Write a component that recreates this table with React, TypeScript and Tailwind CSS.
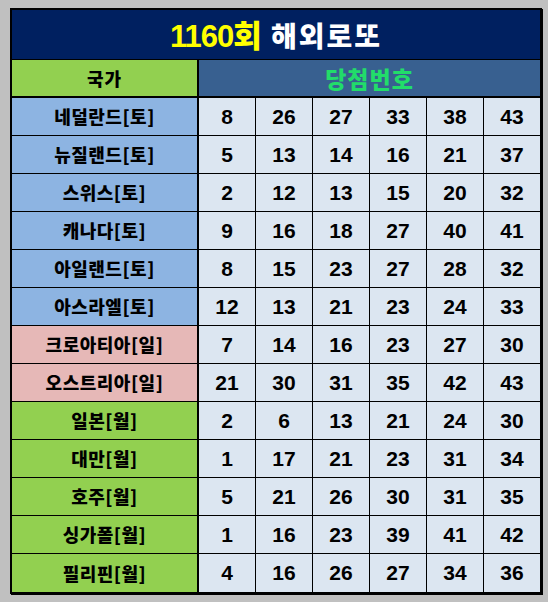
const rows: { name: string; tone: 'blue' | 'pink' | 'green'; nums: number[] }[] = [
  { name: '네덜란드[토]', tone: 'blue', nums: [8, 26, 27, 33, 38, 43] },
  { name: '뉴질랜드[토]', tone: 'blue', nums: [5, 13, 14, 16, 21, 37] },
  { name: '스위스[토]', tone: 'blue', nums: [2, 12, 13, 15, 20, 32] },
  { name: '캐나다[토]', tone: 'blue', nums: [9, 16, 18, 27, 40, 41] },
  { name: '아일랜드[토]', tone: 'blue', nums: [8, 15, 23, 27, 28, 32] },
  { name: '아스라엘[토]', tone: 'blue', nums: [12, 13, 21, 23, 24, 33] },
  { name: '크로아티아[일]', tone: 'pink', nums: [7, 14, 16, 23, 27, 30] },
  { name: '오스트리아[일]', tone: 'pink', nums: [21, 30, 31, 35, 42, 43] },
  { name: '일본[월]', tone: 'green', nums: [2, 6, 13, 21, 24, 30] },
  { name: '대만[월]', tone: 'green', nums: [1, 17, 21, 23, 31, 34] },
  { name: '호주[월]', tone: 'green', nums: [5, 21, 26, 30, 31, 35] },
  { name: '싱가폴[월]', tone: 'green', nums: [1, 16, 23, 39, 41, 42] },
  { name: '필리핀[월]', tone: 'green', nums: [4, 16, 26, 27, 34, 36] },
];

const toneClass = (tone: string) => {
  switch (tone) {
    case 'blue':
      return 'bg-[#8db4e2]';
    case 'pink':
      return 'bg-[#e6b8b7]';
    default:
      return 'bg-[#92d050]';
  }
};

const latin = "font-['Liberation_Sans','Noto_Sans_CJK_KR',sans-serif]";
const hangul = "font-['Noto_Sans_CJK_KR',sans-serif]";

export default function App() {
  return (
    <div className={`h-[602px] w-[548px] bg-[#c0c0c0] pt-[8px] pl-[10px] ${latin}`}>
      <div className="w-[532px] border-2 border-black shadow-[1px_1px_0_#000]">
        <div className="flex h-[50px] items-center justify-center gap-[10px] border-b border-black bg-[#002060]">
          <span className="text-[31px] font-bold leading-none tracking-[-1px] text-[#ffff00]">
            1160<span className={`${hangul} font-black`}>회</span>
          </span>
          <span className={`${hangul} text-[28px] font-black leading-none tracking-[2px] text-white`}>해외로또</span>
        </div>
        <div className={`grid h-[38px] grid-cols-[187px_1fr] border-b-2 border-black font-black ${hangul}`}>
          <div className="flex items-center justify-center border-r-2 border-black bg-[#92d050] text-[18px] tracking-[1px] text-black">
            국가
          </div>
          <div className="flex items-center justify-center bg-[#386090] text-[23px] tracking-[1px] text-[#22dc6a]">
            당첨번호
          </div>
        </div>
        {rows.map((row, idx) => (
          <div
            key={row.name}
            className={`grid h-[38px] grid-cols-[187px_57px_57px_57px_57px_57px_1fr] text-black ${
              idx < rows.length - 1 ? 'border-b border-black' : ''
            }`}
          >
            <div
              className={`flex items-center justify-center border-r-2 border-black ${hangul} text-[18px] font-black tracking-[0.5px] ${toneClass(
                row.tone,
              )}`}
            >
              {row.name}
            </div>
            {row.nums.map((n, i) => (
              <div
                key={i}
                className={`flex items-center justify-center bg-[#dce6f1] text-[21px] font-bold ${
                  i < 5 ? 'border-r border-black' : ''
                }`}
              >
                {n}
              </div>
            ))}
          </div>
        ))}
      </div>
    </div>
  );
}
